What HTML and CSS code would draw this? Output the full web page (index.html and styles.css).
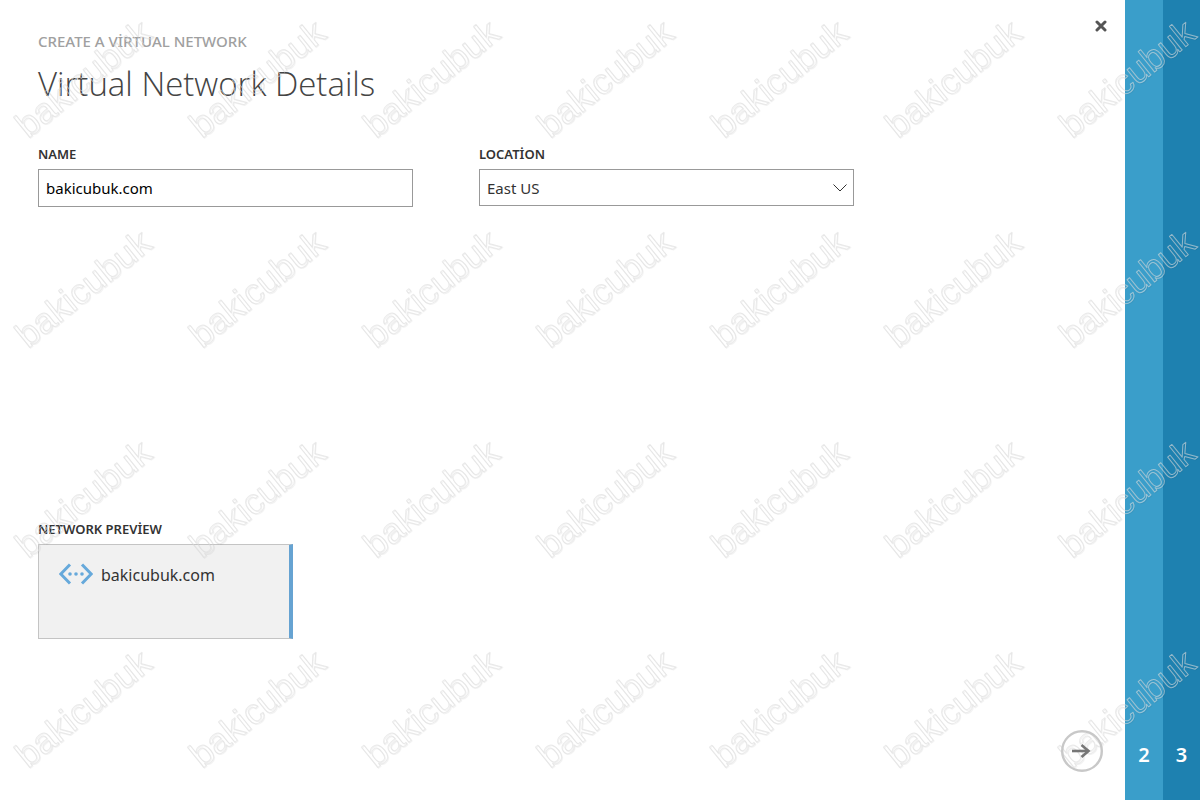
FILE: index.html
```html
<!DOCTYPE html>
<html lang="en">
  <head>
    <meta charset="UTF-8" />
    <meta name="viewport" content="width=device-width, initial-scale=1.0" />
    <title>Create a Virtual Network</title>
    <link rel="stylesheet" href="styles.css">
  </head>
  <body>
    <main class="wizard">
      <header class="wizard-header">
        <div class="titles">
          <p class="subtitle">CREATE A VİRTUAL NETWORK</p>
          <h1>Virtual Network Details</h1>
        </div>
        <button class="close-btn" type="button" aria-label="Close">
          <svg width="12" height="12" viewBox="0 0 12 12">
            <path d="M2 2 L10 10 M10 2 L2 10" />
          </svg>
        </button>
      </header>

      <form class="fields">
        <div class="field">
          <label for="name">NAME</label>
          <input type="text" id="name" value="bakicubuk.com" />
        </div>
        <div class="field">
          <label for="location">LOCATİON</label>
          <div class="select-box">
            <select id="location">
              <option>East US</option>
            </select>
            <svg class="chevron" width="14" height="8" viewBox="0 0 14 8">
              <path d="M0.5 0.5 L7 7 L13.5 0.5" />
            </svg>
          </div>
        </div>
      </form>

      <section class="preview">
        <h2>NETWORK PREVİEW</h2>
        <div class="network">
          <svg width="34" height="22" viewBox="0 0 34 22">
            <path d="M11 1.5 L1.8 11 L11 20.5 M23 1.5 L32.2 11 L23 20.5" />
            <circle cx="11" cy="11" r="1.8" />
            <circle cx="17" cy="11" r="1.8" />
            <circle cx="23" cy="11" r="1.8" />
          </svg>
          <span>bakicubuk.com</span>
        </div>
      </section>

      <footer class="wizard-footer">
        <button class="next-btn" type="button" aria-label="Next">
          <svg width="42" height="42" viewBox="0 0 42 42">
            <circle cx="21" cy="21" r="19.8" />
            <path class="shaft" d="M11 21 H27" />
            <path class="head" d="M20.5 15 L27.5 21 L20.5 27" />
          </svg>
        </button>
      </footer>
    </main>

    <button class="step step-two" type="button">2</button>
    <button class="step step-three" type="button">3</button>

    <svg class="watermark" width="100%" height="100%" aria-hidden="true">
      <defs>
        <pattern id="mark" width="174" height="210" patternUnits="userSpaceOnUse">
          <g transform="translate(28 139) rotate(-39)">
            <text class="mark-shadow" x="0" y="1">bakicubuk</text>
            <text class="mark-edge">bakicubuk</text>
          </g>
        </pattern>
      </defs>
      <rect width="100%" height="100%" fill="url(#mark)" />
    </svg>
  </body>
</html>
```
FILE: styles.css
```css
* {
  box-sizing: border-box;
}

body {
  display: flex;
  min-height: 100vh;
  margin: 0;
  font-family: "Noto Sans", "Open Sans", sans-serif;
  color: #333;
  background-color: #fff;
}

.wizard {
  display: flex;
  flex: 1;
  flex-direction: column;
  padding: 16px 22px 28px 38px;
}

.wizard-header {
  display: flex;
  justify-content: space-between;
  align-items: flex-start;
}

.subtitle {
  margin: 15px 0 0;
  font-size: 15px;
  font-weight: 500;
  line-height: 20px;
  color: #a0a0a0;
}

h1 {
  margin: 10px 0 0;
  font-family: "Open Sans", sans-serif;
  font-size: 33px;
  font-weight: 300;
  line-height: 46px;
  color: #444;
}

button {
  padding: 0;
  border: none;
  background: none;
  font-family: inherit;
  cursor: pointer;
}

.close-btn svg,
.next-btn svg {
  display: block;
}

.close-btn {
  margin-right: -4px;
  padding: 4px 0;
}

.close-btn path {
  stroke: #555;
  stroke-width: 3;
  stroke-linecap: round;
}

.fields {
  display: flex;
  gap: 66px;
  min-height: 375px;
  margin-top: 37px;
}

.field {
  flex: 0 1 375px;
}

label,
h2 {
  display: block;
  margin: 0 0 5px;
  font-size: 13px;
  font-weight: 600;
  line-height: 20px;
}

input,
select {
  display: block;
  width: 100%;
  height: 38px;
  padding: 0 7px;
  border: 1px solid #999;
  border-radius: 0;
  outline: none;
  font-family: inherit;
  font-size: 15px;
  color: #000;
  background-color: #fff;
}

select {
  height: 37px;
  color: #333;
  appearance: none;
}

.select-box {
  position: relative;
}

.chevron {
  position: absolute;
  top: 15px;
  right: 7px;
  fill: none;
  stroke: #333;
  pointer-events: none;
}

.network {
  display: flex;
  align-items: flex-start;
  gap: 8px;
  width: 255px;
  max-width: 100%;
  min-height: 95px;
  padding: 18px 20px;
  border: 1px solid #c4c4c4;
  border-right: 4px solid #66a3d2;
  font-size: 16px;
  line-height: 24px;
  background-color: #f1f1f1;
}

.network path {
  fill: none;
  stroke: #66a9db;
  stroke-width: 3;
}

.network circle {
  fill: #66a9db;
}

.wizard-footer {
  display: flex;
  justify-content: flex-end;
  margin-top: auto;
}

.next-btn {
  position: relative;
  z-index: 1;
}

.next-btn svg {
  fill: none;
}

.next-btn circle {
  stroke: #c8c8c8;
  stroke-width: 2.4;
}

.next-btn path {
  stroke: #777;
  stroke-width: 2.6;
}

.step {
  display: flex;
  flex: 0 0 38px;
  align-items: flex-end;
  justify-content: center;
  padding-bottom: 31px;
  font-size: 20px;
  font-weight: 600;
  line-height: 28px;
  color: #fff;
}

.step-two {
  background-color: #3a9eca;
}

.step-three {
  flex-basis: 37px;
  background-color: #1e81b0;
}

.watermark {
  position: absolute;
  top: 0;
  left: 0;
  pointer-events: none;
}

.watermark text {
  font-family: "Liberation Sans", Arial, sans-serif;
  font-size: 36px;
  fill: none;
}

.mark-shadow {
  stroke: #000;
  stroke-width: 1;
  stroke-opacity: 0.05;
}

.mark-edge {
  stroke: #ddd;
  stroke-width: 1;
  stroke-linejoin: round;
  stroke-opacity: 0.6;
}
```
